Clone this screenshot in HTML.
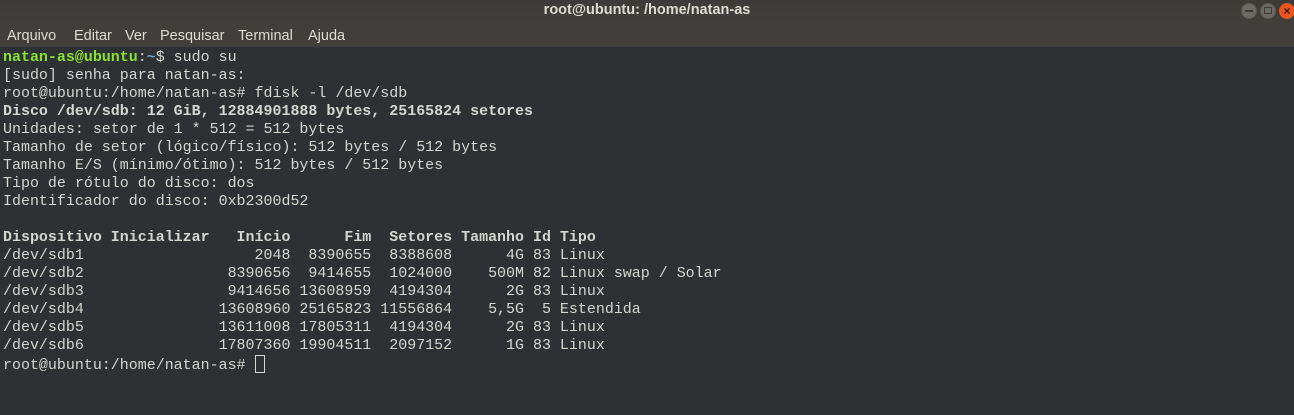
<!DOCTYPE html>
<html><head><meta charset="utf-8"><style>
body{margin:0;width:1294px;height:415px;overflow:hidden;background:#2e3133;font-family:"Liberation Sans",sans-serif}
#title{position:absolute;left:0;top:0;width:1294px;height:24px;background:linear-gradient(#3c3b37,#403f3b);color:#dfdbd2;font-weight:bold;font-size:14.5px;text-align:center;line-height:20px}
#menu{position:absolute;left:0;top:24px;width:1294px;height:23px;background:#403f3b;color:#dfdbd2;font-size:14.5px;line-height:24px}
#menu span{position:absolute;top:0}
.b{position:absolute;top:3px;width:16px;height:16px;border-radius:50%;background:#6b6a65;box-shadow:inset 0 0 0 1px #57564f}
pre{position:absolute;left:3px;top:49px;margin:0;font-family:"Liberation Mono",monospace;font-size:14.97px;line-height:18px;color:#d3d7cf}
.g{color:#8ae234;font-weight:bold}.u{color:#729fcf;font-weight:bold}
.cur{display:inline-block;width:10px;height:18px;border:1px solid #d3d7cf;box-sizing:border-box;vertical-align:-4px}
</style></head><body>
<div id="title">root@ubuntu: /home/natan-as</div>
<div class="b" style="left:1241px"><div style="position:absolute;left:4px;top:7px;width:8px;height:2px;background:#3c3b37"></div></div>
<div class="b" style="left:1260px"><div style="position:absolute;left:4px;top:4px;width:8px;height:7px;border:1px solid #3c3b37;box-sizing:border-box"></div></div>
<div class="b" style="left:1279px;background:#e9541f;box-shadow:none;color:#3a1a0a;font-size:12px;text-align:center;line-height:16px;font-weight:bold">×</div>
<div id="menu"><span style="left:7px">Arquivo</span><span style="left:74px">Editar</span><span style="left:125px">Ver</span><span style="left:160px">Pesquisar</span><span style="left:238px">Terminal</span><span style="left:308px">Ajuda</span></div>
<pre><span class="g">natan-as@ubuntu</span>:<span class="u">~</span>$ sudo su
[sudo] senha para natan-as: 
root@ubuntu:/home/natan-as# fdisk -l /dev/sdb
<b>Disco /dev/sdb: 12 GiB, 12884901888 bytes, 25165824 setores</b>
Unidades: setor de 1 * 512 = 512 bytes
Tamanho de setor (lógico/físico): 512 bytes / 512 bytes
Tamanho E/S (mínimo/ótimo): 512 bytes / 512 bytes
Tipo de rótulo do disco: dos
Identificador do disco: 0xb2300d52

<b>Dispositivo Inicializar   Início      Fim  Setores Tamanho Id Tipo</b>
/dev/sdb1                   2048  8390655  8388608      4G 83 Linux
/dev/sdb2                8390656  9414655  1024000    500M 82 Linux swap / Solar
/dev/sdb3                9414656 13608959  4194304      2G 83 Linux
/dev/sdb4               13608960 25165823 11556864    5,5G  5 Estendida
/dev/sdb5               13611008 17805311  4194304      2G 83 Linux
/dev/sdb6               17807360 19904511  2097152      1G 83 Linux
root@ubuntu:/home/natan-as# <span class="cur"></span></pre>
</body></html>
